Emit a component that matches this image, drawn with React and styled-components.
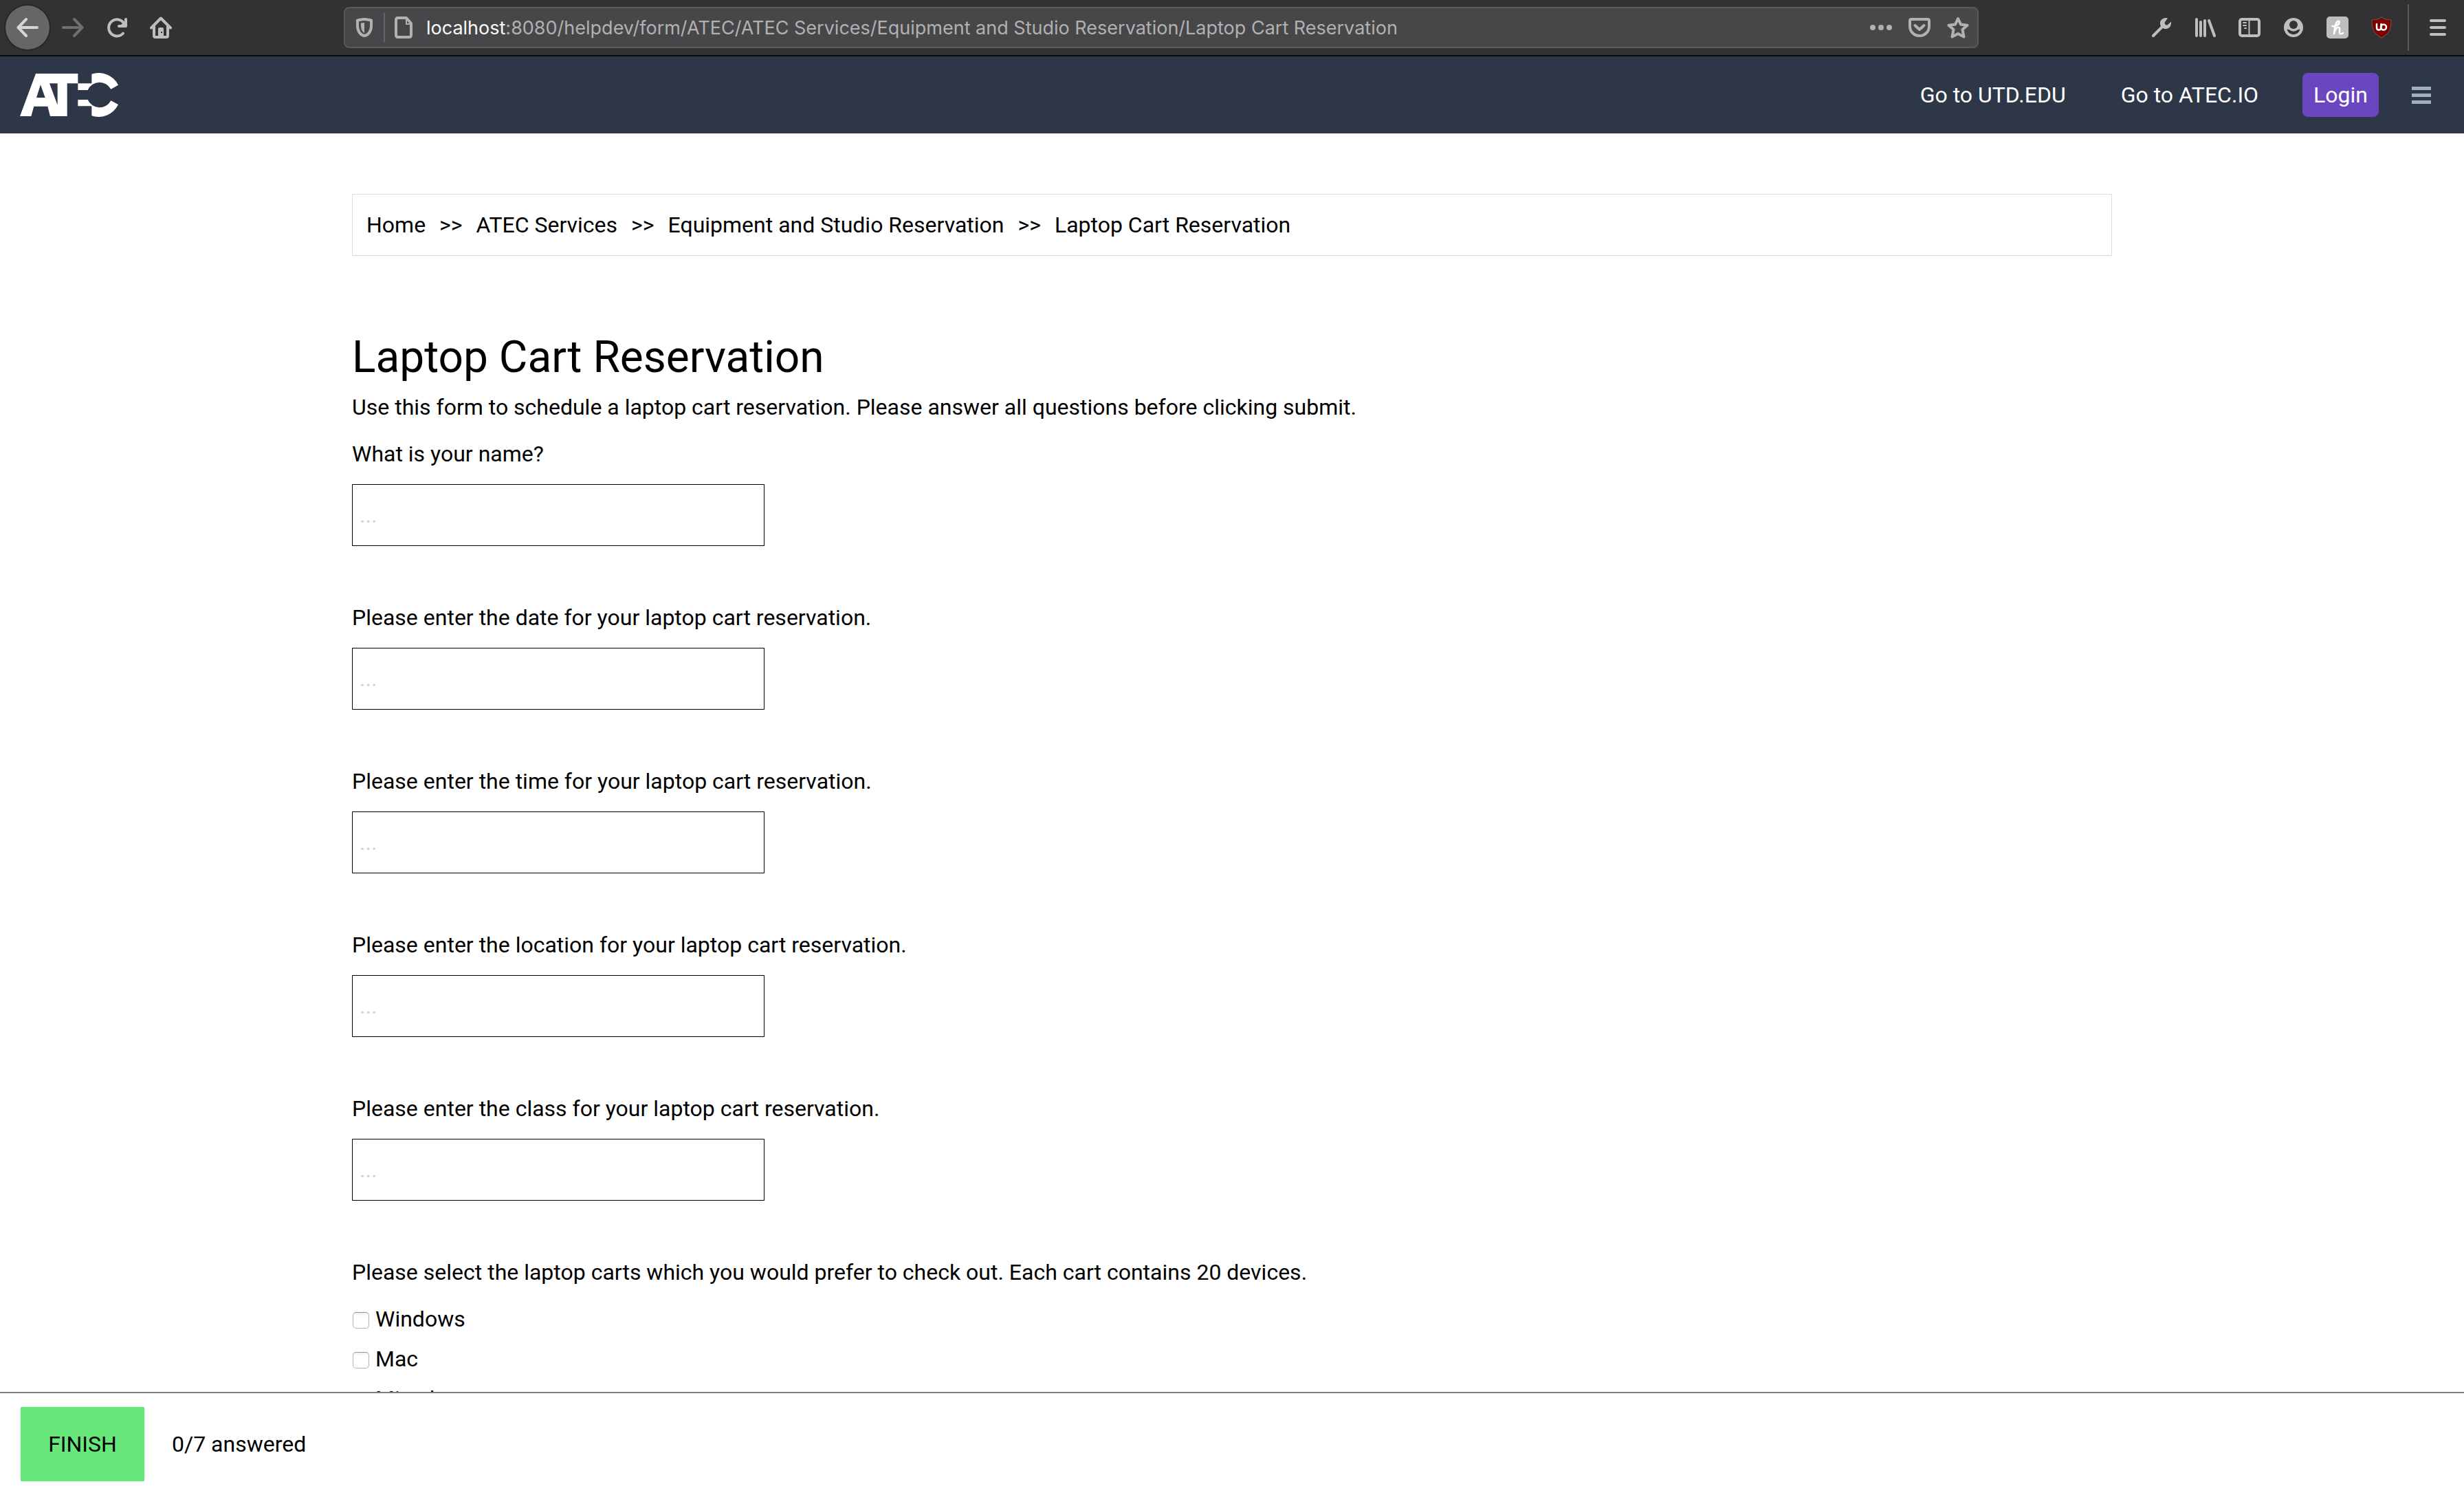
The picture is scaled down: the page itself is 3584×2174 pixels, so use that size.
import React, { useState } from "react";
import styled, { createGlobalStyle } from "styled-components";

const GlobalStyle = createGlobalStyle`
  *, *::before, *::after { box-sizing: border-box; }
  body {
    margin: 0;
    background: #fff;
    color: #000;
    font: 400 32px/48px Roboto, "Liberation Sans", sans-serif;
  }
  button, input { font: inherit; color: inherit; }
  a { color: inherit; text-decoration: none; }
`;

const Window = styled.div`
  height: 100vh;
  display: flex;
  flex-direction: column;
`;

/* Browser toolbar */
const Toolbar = styled.header`
  flex: none;
  display: flex;
  align-items: center;
  height: 82px;
  padding: 0 6px 0 8px;
  background: #323234;
  border-bottom: 2px solid #0c0c0d;
`;

const NavButtons = styled.div`
  display: flex;
  align-items: center;
  flex: 0 0 492px;
`;

const IconButton = styled.button`
  flex: none;
  display: flex;
  align-items: center;
  justify-content: center;
  width: ${(p) => p.$width || 64}px;
  height: 64px;
  padding: 0;
  border: 0;
  background: none;
  color: ${(p) => p.$color || "#bebebf"};
`;

const BackButton = styled(IconButton)`
  margin-right: 2px;
  border-radius: 50%;
  background: #666667;
  color: #d6d6d6;
  box-shadow: 0 0 0 2px #272729;
`;

const AddressBar = styled.div`
  flex: 1;
  min-width: 0;
  display: flex;
  align-items: center;
  height: 60px;
  border: 2px solid #59595b;
  border-radius: 8px;
  background: #474749;
  color: #b1b1b3;
`;

const AddressDivider = styled.span`
  width: 2px;
  height: 42px;
  background: #5f6670;
`;

const Address = styled.div`
  flex: 1;
  overflow: hidden;
  white-space: nowrap;
  outline: none;
  margin-left: 4px;
  padding-top: 2px;
  font: 400 27px/36px Inter, "Liberation Sans", sans-serif;
`;

const Host = styled.span`
  color: #f9f9fa;
`;

const Extensions = styled.div`
  display: flex;
  align-items: center;
  margin-left: 234px;
`;

const ToolbarDivider = styled.span`
  width: 2px;
  height: 68px;
  margin: 0 10px 0 6px;
  background: #5a5a5c;
`;

/* Site navigation */
const SiteNav = styled.nav`
  flex: none;
  display: flex;
  align-items: center;
  justify-content: space-between;
  height: 112px;
  padding: 0 48px 0 29px;
  background: #2d3748;
  color: #fff;
`;

const LogoLink = styled.a`
  display: flex;
`;

const SiteLinks = styled.div`
  display: flex;
  align-items: center;
`;

const SiteLink = styled.a`
  margin-right: 80px;
`;

const LoginButton = styled.button`
  height: 64px;
  margin: 0 48px 0 -16px;
  padding: 0 16px;
  border: 0;
  border-radius: 8px;
  background: #6b46c1;
  color: #fff;
`;

const MenuButton = styled.button`
  display: flex;
  padding: 0;
  border: 0;
  background: none;
  color: #a0aec0;
`;

/* Page */
const Main = styled.main`
  flex: 1;
  min-height: 0;
  overflow: hidden;
`;

const Container = styled.div`
  max-width: 2560px;
  margin: 0 auto;
  padding-top: 88px;
`;

const Breadcrumbs = styled.nav`
  display: flex;
  align-items: center;
  gap: 20px;
  height: 90px;
  padding: 0 20px;
  border: 1px solid #dcdcdc;
`;

const Title = styled.h1`
  margin: 108px 0 8px;
  font-size: 64px;
  line-height: 80px;
  font-weight: 400;
`;

const Intro = styled.p`
  margin: 0 0 20px;
`;

const Question = styled.div`
  display: flex;
  flex-direction: column;
  align-items: flex-start;
  gap: 20px;
  margin-bottom: 80px;
`;

const AnswerInput = styled.input`
  width: 600px;
  height: 90px;
  padding: 0 10px;
  border: 1px solid #000;
  border-radius: 0;
  background: #fff;
  &::placeholder { color: #cbd5e0; opacity: 1; }
`;

const ChoiceGroup = styled.fieldset`
  margin: 0;
  padding: 0;
  border: 0;
`;

const ChoiceLegend = styled.legend`
  padding: 0;
  margin-bottom: 20px;
`;

const Choice = styled.label`
  display: flex;
  align-items: center;
  gap: 9px;
  margin-bottom: 10px;
`;

const Tick = styled.input`
  appearance: none;
  width: 24px;
  height: 24px;
  margin: 4px 0 0 1px;
  border: 1px solid #b4b4b4;
  border-top-color: #989898;
  border-radius: 5px;
  background: linear-gradient(#efefef, #fff 5px);
  &:checked { background: #6b46c1; }
`;

const ActionBar = styled.footer`
  flex: none;
  display: flex;
  align-items: center;
  gap: 40px;
  padding: 20px 30px;
  border-top: 2px solid #808080;
  background: #fff;
`;

const FinishButton = styled.button`
  width: 180px;
  height: 108px;
  padding: 0;
  border: 0;
  background: #68e87b;
`;

const Icon = ({ children, size = 32, ...rest }) => (
  <svg
    width={size}
    height={size}
    viewBox="0 0 32 32"
    fill="none"
    stroke="currentColor"
    strokeWidth="4"
    strokeLinecap="round"
    strokeLinejoin="round"
    aria-hidden="true"
    {...rest}
  >
    {children}
  </svg>
);

const BackIcon = () => (
  <Icon><path d="M30 16H3M14 4 2.5 16 14 28" /></Icon>
);
const ForwardIcon = () => (
  <Icon><path d="M2 16h27M18 4l11.500 12L18 28" /></Icon>
);
const ReloadIcon = () => (
  <Icon>
    <path d="M25 24.500A12 12 0 1 1 26 9.500" />
    <path d="M29 4v10H19" />
    <path d="M28 6v7h-7z" fill="currentColor" stroke="none" />
  </Icon>
);
const HomeIcon = () => (
  <Icon>
    <path d="M2 16.500 16 2.500l14 14" />
    <path d="M6 14v14q0 2 2 2h16q2 0 2-2V14" />
    <path d="M12 30V18q0-2 2-2h4q2 0 2 2v12z" fill="currentColor" stroke="none" />
    <rect x="16" y="22" width="2" height="2" fill="#323234" stroke="none" />
  </Icon>
);
const ShieldIcon = () => (
  <Icon>
    <path d="M16 4C13 4 9 5 6 5.500V14c0 7 4 13 10 14 6-1 10-7 10-14V5.500C23 5 19 4 16 4z" />
    <path d="M16 9v15c-3-1.500-5-6-5-10V9.500z" fill="currentColor" stroke="none" />
  </Icon>
);
const PageIcon = () => (
  <Icon>
    <path d="M7 2h12l7 8v17q0 3-3 3H7q-3 0-3-3V5q0-3 3-3z" />
    <path d="M19 3v8h8" strokeWidth="2" />
  </Icon>
);
const DotsIcon = () => (
  <Icon fill="currentColor" stroke="none">
    <circle cx="4" cy="16" r="4" />
    <circle cx="16" cy="16" r="4" />
    <circle cx="28" cy="16" r="4" />
  </Icon>
);
const PocketIcon = () => (
  <Icon>
    <path d="M4 4h24q2 0 2 2v8c0 8-6 14-14 14S2 22 2 14V6q0-2 2-2z" />
    <path d="M9.500 13l6.500 6 6.500-6" />
  </Icon>
);
const StarIcon = () => (
  <Icon>
    <path d="M16 3l4 8.500 9.500 1.200-7 6.400 2 10.400L16 25l-8.500 4.500 2-10.400-7-6.400L12 11.500z" />
  </Icon>
);
const WrenchIcon = () => (
  <Icon>
    <path d="M4 28 18 14" />
    <path
      d="M25 2.500C19 .8 13.500 5 14 10.500c.4 5 4.500 7.700 8.500 7.500 5-.3 8-4.500 7.500-10.500l-5 4.500q-2 1.200-3.600-.4T21 8z"
      fill="currentColor"
      stroke="none"
    />
  </Icon>
);
const LibraryIcon = () => (
  <Icon>
    <path d="M3 4v24M9 8v20M15 6v22M21 6l8 22" />
  </Icon>
);
const SidebarIcon = () => (
  <Icon>
    <rect x="2" y="4" width="28" height="24" rx="3" />
    <path d="M15.500 4v24M7 9h4M7 13h4M9 17h2" strokeWidth="2" />
  </Icon>
);
const AccountIcon = () => (
  <Icon fill="currentColor" stroke="none">
    <circle cx="16" cy="16" r="14" />
    <circle cx="16" cy="12" r="6" fill="#323234" />
    <path d="M6.500 18.500q3 0 4.500 1.500 5 3 10 0 1.500-1.500 4.500-1.500C24 24 20 26 16 26s-8-2-9.500-7.500z" fill="#323234" />
  </Icon>
);
const HoneyIcon = () => (
  <Icon>
    <rect width="32" height="32" rx="5" fill="currentColor" stroke="none" />
    <path d="M8.500 14c5 1 11-3 10-6.500-2-3-5.500 2.500-6.500 9.500l-1 8c1-6 4-10 7-9s0 6 1 8 4 1 5 0" stroke="#fff" strokeWidth="2.500" />
  </Icon>
);
const BlockerIcon = () => (
  <Icon>
    <path d="M16 1c4 3 8 4 14 4-.3 14-2 19-14 26C4 24 2.300 19 2 5c6 0 10-1 14-4z" fill="#800000" stroke="#6a5c5d" strokeWidth="1" />
    <path d="M9 11v5q0 3.500 3 3.500 3.500 0 3.500-4.500V11" stroke="#fff" strokeWidth="2.500" />
    <circle cx="19" cy="15.500" r="4" stroke="#fff" strokeWidth="2.500" />
  </Icon>
);
const BurgerIcon = () => (
  <Icon><path d="M6 6h20M6 16h20M6 26h20" /></Icon>
);

const SiteMenuIcon = () => (
  <svg width="28" height="28" viewBox="0 0 28 28" fill="currentColor" aria-hidden="true">
    <path d="M0 2h28v5H0zM0 12h28v5H0zM0 22h28v5H0z" />
  </svg>
);

const Logo = () => (
  <svg width="144" height="64" viewBox="88 78 432 192" fill="#fff" aria-hidden="true">
    <path
      fillRule="evenodd"
      d="M88 267 157 81H341V124H294V267H220L209 224H149L137 267zM178 130 160 186H198zM217 124 252 218V124z"
    />
    <path d="M341 124H401V83A96 96 0 0 1 517 131L485 149A56 56 0 0 0 384 153H341z" />
    <path d="M341 223H401V265A96 96 0 0 0 517 216L485 199A56 56 0 0 1 384 195H341z" />
  </svg>
);

const extensions = [
  ["Developer tools", WrenchIcon],
  ["Library", LibraryIcon],
  ["Sidebars", SidebarIcon],
  ["Account", AccountIcon],
  ["Honey", HoneyIcon],
  ["uBlock Origin", BlockerIcon],
];

const crumbs = ["Home", "ATEC Services", "Equipment and Studio Reservation", "Laptop Cart Reservation"];

const questions = [
  ["name", "What is your name?"],
  ["date", "Please enter the date for your laptop cart reservation."],
  ["time", "Please enter the time for your laptop cart reservation."],
  ["location", "Please enter the location for your laptop cart reservation."],
  ["class", "Please enter the class for your laptop cart reservation."],
];

const carts = ["Windows", "Mac", "Mixed"];

function BrowserToolbar() {
  return (
    <Toolbar>
      <NavButtons>
        <BackButton aria-label="Back"><BackIcon /></BackButton>
        <IconButton aria-label="Forward" $color="#6f6f71"><ForwardIcon /></IconButton>
        <IconButton aria-label="Reload"><ReloadIcon /></IconButton>
        <IconButton aria-label="Home page"><HomeIcon /></IconButton>
      </NavButtons>
      <AddressBar>
        <IconButton aria-label="Tracking protection" $width={56} $color="#b1b1b3"><ShieldIcon /></IconButton>
        <AddressDivider />
        <IconButton aria-label="Site information" $width={56} $color="#b1b1b3"><PageIcon /></IconButton>
        <Address role="textbox" aria-label="Address" contentEditable suppressContentEditableWarning spellCheck={false}>
          <Host>localhost</Host>:8080/helpdev/form/ATEC/ATEC Services/Equipment and Studio Reservation/Laptop Cart Reservation
        </Address>
        <IconButton aria-label="Page actions" $width={56} $color="#b1b1b3"><DotsIcon /></IconButton>
        <IconButton aria-label="Save to Pocket" $width={56} $color="#b1b1b3"><PocketIcon /></IconButton>
        <IconButton aria-label="Bookmark" $width={56} $color="#b1b1b3"><StarIcon /></IconButton>
      </AddressBar>
      <Extensions>
        {extensions.map(([name, Glyph]) => (
          <IconButton key={name} aria-label={name}><Glyph /></IconButton>
        ))}
        <ToolbarDivider />
        <IconButton aria-label="Open menu"><BurgerIcon /></IconButton>
      </Extensions>
    </Toolbar>
  );
}

export default function App() {
  const [answers, setAnswers] = useState({});
  const [picked, setPicked] = useState({});
  const answered =
    Object.values(answers).filter(Boolean).length +
    (Object.values(picked).some(Boolean) ? 1 : 0);

  return (
    <>
      <GlobalStyle />
      <Window>
        <BrowserToolbar />
        <SiteNav aria-label="Site">
          <LogoLink href="#home" aria-label="ATEC"><Logo /></LogoLink>
          <SiteLinks>
            <SiteLink href="#utd">Go to UTD.EDU</SiteLink>
            <SiteLink href="#atec">Go to ATEC.IO</SiteLink>
            <LoginButton>Login</LoginButton>
            <MenuButton aria-label="Menu"><SiteMenuIcon /></MenuButton>
          </SiteLinks>
        </SiteNav>
        <Main>
          <Container>
            <Breadcrumbs aria-label="Breadcrumb">
              {crumbs.map((crumb, i) => (
                <React.Fragment key={crumb}>
                  {i > 0 && <span>&gt;&gt;</span>}
                  <a href={`#crumb-${i}`}>{crumb}</a>
                </React.Fragment>
              ))}
            </Breadcrumbs>
            <Title>Laptop Cart Reservation</Title>
            <Intro>
              Use this form to schedule a laptop cart reservation. Please answer all questions before clicking submit.
            </Intro>
            {questions.map(([id, text]) => (
              <Question key={id}>
                <label htmlFor={id}>{text}</label>
                <AnswerInput
                  id={id}
                  type="text"
                  placeholder="..."
                  value={answers[id] || ""}
                  onChange={(e) => setAnswers({ ...answers, [id]: e.target.value })}
                />
              </Question>
            ))}
            <ChoiceGroup>
              <ChoiceLegend>
                Please select the laptop carts which you would prefer to check out. Each cart contains 20 devices.
              </ChoiceLegend>
              {carts.map((cart) => (
                <Choice key={cart}>
                  <Tick
                    type="checkbox"
                    checked={!!picked[cart]}
                    onChange={(e) => setPicked({ ...picked, [cart]: e.target.checked })}
                  />
                  {cart}
                </Choice>
              ))}
            </ChoiceGroup>
          </Container>
        </Main>
        <ActionBar>
          <FinishButton>FINISH</FinishButton>
          <span>{answered}/7 answered</span>
        </ActionBar>
      </Window>
    </>
  );
}
